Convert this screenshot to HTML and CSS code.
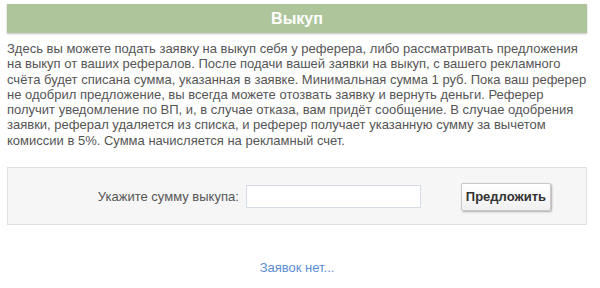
FILE: index.html
```html
<!DOCTYPE html>
<html lang="ru">
<head>
    <meta charset="UTF-8" />
    <title>Выкуп</title>
    <link rel="stylesheet" href="styles.css">
</head>
<body>

    <div class="page">
        <h1 class="title">Выкуп</h1>

        <p class="info">
            Здесь вы можете подать заявку на выкуп себя у реферера, либо рассматривать предложения
            на выкуп от ваших рефералов. После подачи вашей заявки на выкуп, с вашего рекламного
            счёта будет списана сумма, указанная в заявке. Минимальная сумма 1 руб. Пока ваш реферер
            не одобрил предложение, вы всегда можете отозвать заявку и вернуть деньги. Реферер
            получит уведомление по ВП, и, в случае отказа, вам придёт сообщение. В случае одобрения
            заявки, реферал удаляется из списка, и реферер получает указанную сумму за вычетом
            комиссии в 5%. Сумма начисляется на рекламный счет.
        </p>

        <form class="offer" onsubmit="return false;">
            <label for="amount">Укажите сумму выкупа:</label>
            <input type="text" id="amount">
            <button type="submit">Предложить</button>
        </form>

        <div class="empty"><a href="#">Заявок нет...</a></div>
    </div>

</body>
</html>
```

FILE: styles.css
```css
* {
    box-sizing: border-box;
    margin: 0;
    padding: 0;
}

body {
    background: #fff;
    font-family: 'Liberation Sans', Arial, sans-serif;
    font-size: 13px;
    color: #555;
}

.page {
    width: 580px;
    margin: 4px 0 0 7px;
}

.title {
    height: 29px;
    line-height: 29px;
    background: #aec59c;
    color: #fff;
    font-size: 16px;
    font-weight: bold;
    text-align: center;
    box-shadow: 0 1px 2px rgba(0,0,0,0.25);
}

.info {
    margin-top: 8px;
    line-height: 15.3px;
}

.offer {
    display: flex;
    align-items: center;
    justify-content: flex-end;
    margin-top: 19px;
    height: 58px;
    padding: 1px 35px 0 0;
    background: #f6f6f6;
    border: 1px solid #e0e0e0;
}

.offer label {
    margin-right: 7px;
    color: #555;
}

.offer input {
    width: 175px;
    height: 23px;
    border: 1px solid #d6dce4;
    background: #fff;
    font-size: 13px;
    padding: 0 4px;
}

.offer button {
    margin-left: 40px;
    height: 28px;
    padding: 0 4px;
    font-family: 'Liberation Sans', Arial, sans-serif;
    font-size: 13px;
    font-weight: bold;
    color: #333;
    background: linear-gradient(#fff, #f0f0f0);
    border: 1px solid #c8c8c8;
    border-radius: 2px;
    box-shadow: 1px 1px 2px rgba(0,0,0,0.3);
    cursor: pointer;
}

.empty {
    margin-top: 35px;
    text-align: center;
}

.empty a {
    color: #5b8dd6;
    text-decoration: none;
    font-size: 13px;
}
```
